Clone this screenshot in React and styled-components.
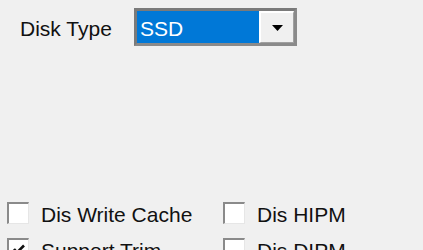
import React from "react";
import styled, { createGlobalStyle } from "styled-components";

const Global = createGlobalStyle`
  html, body { margin: 0; padding: 0; background: #f0f0f0; }
  body { font-family: "Liberation Sans", Arial, sans-serif; overflow: hidden; }
`;

const Page = styled.div`
  width: 423px;
  height: 250px;
  background: #f0f0f0;
  padding-top: 8px;
  box-sizing: border-box;
  overflow: hidden;
`;

const FieldRow = styled.div`
  display: flex;
  align-items: center;
  height: 38px;
  padding-left: 20px;
`;

const Label = styled.span`
  width: 114px;
  font-size: 21px;
  color: #111;
  padding-top: 3px;
`;

const Combo = styled.div`
  display: flex;
  width: 163px;
  height: 38px;
  box-sizing: border-box;
  border: 3px solid #8a8a8a;
  border-top-color: #7a7a7a;
  border-left-color: #7a7a7a;
  background: #fff;
`;

const ComboValue = styled.div`
  flex: 1;
  background: #0078d7;
  color: #fff;
  font-size: 21px;
  display: flex;
  align-items: center;
  padding-left: 3px;
  padding-top: 3px;
`;

const DropButton = styled.div`
  width: 35px;
  box-sizing: border-box;
  background: #f0f0f0;
  border-left: 2px solid #fff;
  border-top: 2px solid #fff;
  border-right: 1px solid #a0a0a0;
  border-bottom: 1px solid #a0a0a0;
  display: flex;
  align-items: center;
  justify-content: center;
`;

const Options = styled.div`
  display: grid;
  grid-template-columns: 216px auto;
  grid-auto-rows: 36px;
  margin-top: 156px;
  padding-left: 7px;
`;

const Option = styled.label`
  display: flex;
  align-items: flex-start;
  gap: 12px;
  font-size: 21px;
  color: #111;
  line-height: 22px;
`;

const OptionText = styled.span`
  padding-top: 2px;
`;

const Box = styled.span`
  width: 22px;
  height: 22px;
  box-sizing: border-box;
  background: #fff;
  border-top: 2px solid #8a8a8a;
  border-left: 2px solid #8a8a8a;
  border-right: 1px solid #e6e6e6;
  border-bottom: 1px solid #e6e6e6;
  display: flex;
  align-items: center;
  justify-content: center;
  flex-shrink: 0;
`;

const Check = () => (
  <svg width="14" height="14" viewBox="0 0 14 14">
    <path d="M2 6 L5 9.5 L12 2.5" fill="none" stroke="#111" strokeWidth="2.6" />
  </svg>
);

const CheckBox = ({ checked, children }) => (
  <Option>
    <Box>{checked && <Check />}</Box>
    <OptionText>{children}</OptionText>
  </Option>
);

export default function App() {
  return (
    <Page>
      <Global />
      <FieldRow>
        <Label>Disk Type</Label>
        <Combo>
          <ComboValue>SSD</ComboValue>
          <DropButton>
            <svg width="11" height="6" viewBox="0 0 11 6">
              <path d="M0 0 H11 L5.5 6 Z" fill="#000" />
            </svg>
          </DropButton>
        </Combo>
      </FieldRow>
      <Options>
        <CheckBox>Dis Write Cache</CheckBox>
        <CheckBox>Dis HIPM</CheckBox>
        <CheckBox checked>Support Trim</CheckBox>
        <CheckBox>Dis DIPM</CheckBox>
      </Options>
    </Page>
  );
}
